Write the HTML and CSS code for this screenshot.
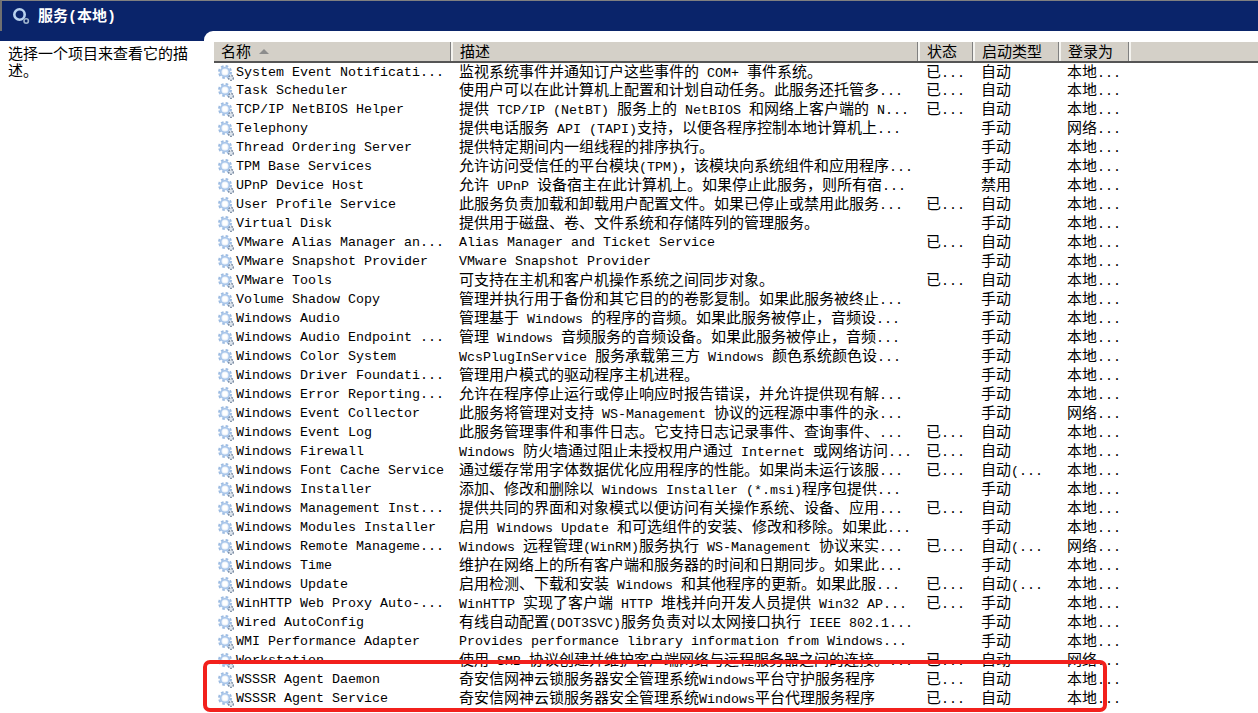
FILE: index.html
```html
<!DOCTYPE html>
<html lang="zh-CN">
<head>
    <meta charset="UTF-8">
    <title>服务(本地)</title>
    <link rel="stylesheet" href="styles.css">
</head>
<body>
    <svg class="defs" width="0" height="0">
        <symbol id="gear" viewBox="0 0 16 16">
            <circle cx="7" cy="7" r="6" fill="none" stroke="#9dbce2" stroke-width="2" stroke-dasharray="2.6 2.1"/>
            <circle cx="7" cy="7" r="4.4" fill="#eef4fb" stroke="#a9c6ea" stroke-width="1.8"/>
            <circle cx="7" cy="7" r="2.4" fill="#fff"/>
            <circle cx="13" cy="13" r="2.4" fill="#dfe6ee" stroke="#7f90a6" stroke-width="1.5" stroke-dasharray="1.6 1"/>
        </symbol>
    </svg>

    <header class="title-bar">
        <svg class="title-icon" width="18" height="18" viewBox="0 0 18 18">
            <circle cx="7.5" cy="7.5" r="5.2" fill="none" stroke="#b9d2ee" stroke-width="2.6"/>
            <circle cx="14.2" cy="14" r="2.2" fill="none" stroke="#9fb4cc" stroke-width="1.6"/>
        </svg>
        <h1 class="title">服务<span class="en-title">(</span>本地<span class="en-title">)</span></h1>
    </header>

    <div class="content">
        <aside class="info-panel">选择一个项目来查看它的描述。</aside>
        <main class="list-panel">
            <table class="services">
                <colgroup>
                    <col class="col-name"><col class="col-desc"><col class="col-status"><col class="col-start"><col class="col-logon"><col>
                </colgroup>
                <thead>
                    <tr>
                        <th>名称<span class="sort-arrow"></span></th>
                        <th>描述</th>
                        <th>状态</th>
                        <th>启动类型</th>
                        <th>登录为</th>
                        <th class="filler"></th>
                    </tr>
                </thead>
                <tbody>
                    <tr><td class="name"><svg class="icon"><use href="#gear"/></svg>System Event Notificati...</td><td>监视系统事件并通知订户这些事件的<span class="en"> COM+ </span>事件系统。</td><td>已<span class="en">...</span></td><td>自动</td><td>本地<span class="en">...</span></td><td></td></tr>
                    <tr><td class="name"><svg class="icon"><use href="#gear"/></svg>Task Scheduler</td><td>使用户可以在此计算机上配置和计划自动任务。此服务还托管多<span class="en">...</span></td><td>已<span class="en">...</span></td><td>自动</td><td>本地<span class="en">...</span></td><td></td></tr>
                    <tr><td class="name"><svg class="icon"><use href="#gear"/></svg>TCP/IP NetBIOS Helper</td><td>提供<span class="en"> TCP/IP (NetBT) </span>服务上的<span class="en"> NetBIOS </span>和网络上客户端的<span class="en"> N...</span></td><td>已<span class="en">...</span></td><td>自动</td><td>本地<span class="en">...</span></td><td></td></tr>
                    <tr><td class="name"><svg class="icon"><use href="#gear"/></svg>Telephony</td><td>提供电话服务<span class="en"> API (TAPI)</span>支持，以便各程序控制本地计算机上<span class="en">...</span></td><td></td><td>手动</td><td>网络<span class="en">...</span></td><td></td></tr>
                    <tr><td class="name"><svg class="icon"><use href="#gear"/></svg>Thread Ordering Server</td><td>提供特定期间内一组线程的排序执行。</td><td></td><td>手动</td><td>本地<span class="en">...</span></td><td></td></tr>
                    <tr><td class="name"><svg class="icon"><use href="#gear"/></svg>TPM Base Services</td><td>允许访问受信任的平台模块<span class="en">(TPM)</span>，该模块向系统组件和应用程序<span class="en">...</span></td><td></td><td>手动</td><td>本地<span class="en">...</span></td><td></td></tr>
                    <tr><td class="name"><svg class="icon"><use href="#gear"/></svg>UPnP Device Host</td><td>允许<span class="en"> UPnP </span>设备宿主在此计算机上。如果停止此服务，则所有宿<span class="en">...</span></td><td></td><td>禁用</td><td>本地<span class="en">...</span></td><td></td></tr>
                    <tr><td class="name"><svg class="icon"><use href="#gear"/></svg>User Profile Service</td><td>此服务负责加载和卸载用户配置文件。如果已停止或禁用此服务<span class="en">...</span></td><td>已<span class="en">...</span></td><td>自动</td><td>本地<span class="en">...</span></td><td></td></tr>
                    <tr><td class="name"><svg class="icon"><use href="#gear"/></svg>Virtual Disk</td><td>提供用于磁盘、卷、文件系统和存储阵列的管理服务。</td><td></td><td>手动</td><td>本地<span class="en">...</span></td><td></td></tr>
                    <tr><td class="name"><svg class="icon"><use href="#gear"/></svg>VMware Alias Manager an...</td><td class="en-cell">Alias Manager and Ticket Service</td><td>已<span class="en">...</span></td><td>自动</td><td>本地<span class="en">...</span></td><td></td></tr>
                    <tr><td class="name"><svg class="icon"><use href="#gear"/></svg>VMware Snapshot Provider</td><td class="en-cell">VMware Snapshot Provider</td><td></td><td>手动</td><td>本地<span class="en">...</span></td><td></td></tr>
                    <tr><td class="name"><svg class="icon"><use href="#gear"/></svg>VMware Tools</td><td>可支持在主机和客户机操作系统之间同步对象。</td><td>已<span class="en">...</span></td><td>自动</td><td>本地<span class="en">...</span></td><td></td></tr>
                    <tr><td class="name"><svg class="icon"><use href="#gear"/></svg>Volume Shadow Copy</td><td>管理并执行用于备份和其它目的的卷影复制。如果此服务被终止<span class="en">...</span></td><td></td><td>手动</td><td>本地<span class="en">...</span></td><td></td></tr>
                    <tr><td class="name"><svg class="icon"><use href="#gear"/></svg>Windows Audio</td><td>管理基于<span class="en"> Windows </span>的程序的音频。如果此服务被停止，音频设<span class="en">...</span></td><td></td><td>手动</td><td>本地<span class="en">...</span></td><td></td></tr>
                    <tr><td class="name"><svg class="icon"><use href="#gear"/></svg>Windows Audio Endpoint ...</td><td>管理<span class="en"> Windows </span>音频服务的音频设备。如果此服务被停止，音频<span class="en">...</span></td><td></td><td>手动</td><td>本地<span class="en">...</span></td><td></td></tr>
                    <tr><td class="name"><svg class="icon"><use href="#gear"/></svg>Windows Color System</td><td><span class="en">WcsPlugInService </span>服务承载第三方<span class="en"> Windows </span>颜色系统颜色设<span class="en">...</span></td><td></td><td>手动</td><td>本地<span class="en">...</span></td><td></td></tr>
                    <tr><td class="name"><svg class="icon"><use href="#gear"/></svg>Windows Driver Foundati...</td><td>管理用户模式的驱动程序主机进程。</td><td></td><td>手动</td><td>本地<span class="en">...</span></td><td></td></tr>
                    <tr><td class="name"><svg class="icon"><use href="#gear"/></svg>Windows Error Reporting...</td><td>允许在程序停止运行或停止响应时报告错误，并允许提供现有解<span class="en">...</span></td><td></td><td>手动</td><td>本地<span class="en">...</span></td><td></td></tr>
                    <tr><td class="name"><svg class="icon"><use href="#gear"/></svg>Windows Event Collector</td><td>此服务将管理对支持<span class="en"> WS-Management </span>协议的远程源中事件的永<span class="en">...</span></td><td></td><td>手动</td><td>网络<span class="en">...</span></td><td></td></tr>
                    <tr><td class="name"><svg class="icon"><use href="#gear"/></svg>Windows Event Log</td><td>此服务管理事件和事件日志。它支持日志记录事件、查询事件、<span class="en">...</span></td><td>已<span class="en">...</span></td><td>自动</td><td>本地<span class="en">...</span></td><td></td></tr>
                    <tr><td class="name"><svg class="icon"><use href="#gear"/></svg>Windows Firewall</td><td><span class="en">Windows </span>防火墙通过阻止未授权用户通过<span class="en"> Internet </span>或网络访问<span class="en">...</span></td><td>已<span class="en">...</span></td><td>自动</td><td>本地<span class="en">...</span></td><td></td></tr>
                    <tr><td class="name"><svg class="icon"><use href="#gear"/></svg>Windows Font Cache Service</td><td>通过缓存常用字体数据优化应用程序的性能。如果尚未运行该服<span class="en">...</span></td><td>已<span class="en">...</span></td><td>自动<span class="en">(...</span></td><td>本地<span class="en">...</span></td><td></td></tr>
                    <tr><td class="name"><svg class="icon"><use href="#gear"/></svg>Windows Installer</td><td>添加、修改和删除以<span class="en"> Windows Installer (*.msi)</span>程序包提供<span class="en">...</span></td><td></td><td>手动</td><td>本地<span class="en">...</span></td><td></td></tr>
                    <tr><td class="name"><svg class="icon"><use href="#gear"/></svg>Windows Management Inst...</td><td>提供共同的界面和对象模式以便访问有关操作系统、设备、应用<span class="en">...</span></td><td>已<span class="en">...</span></td><td>自动</td><td>本地<span class="en">...</span></td><td></td></tr>
                    <tr><td class="name"><svg class="icon"><use href="#gear"/></svg>Windows Modules Installer</td><td>启用<span class="en"> Windows Update </span>和可选组件的安装、修改和移除。如果此<span class="en">...</span></td><td></td><td>手动</td><td>本地<span class="en">...</span></td><td></td></tr>
                    <tr><td class="name"><svg class="icon"><use href="#gear"/></svg>Windows Remote Manageme...</td><td><span class="en">Windows </span>远程管理<span class="en">(WinRM)</span>服务执行<span class="en"> WS-Management </span>协议来实<span class="en">...</span></td><td>已<span class="en">...</span></td><td>自动<span class="en">(...</span></td><td>网络<span class="en">...</span></td><td></td></tr>
                    <tr><td class="name"><svg class="icon"><use href="#gear"/></svg>Windows Time</td><td>维护在网络上的所有客户端和服务器的时间和日期同步。如果此<span class="en">...</span></td><td></td><td>手动</td><td>本地<span class="en">...</span></td><td></td></tr>
                    <tr><td class="name"><svg class="icon"><use href="#gear"/></svg>Windows Update</td><td>启用检测、下载和安装<span class="en"> Windows </span>和其他程序的更新。如果此服<span class="en">...</span></td><td>已<span class="en">...</span></td><td>自动<span class="en">(...</span></td><td>本地<span class="en">...</span></td><td></td></tr>
                    <tr><td class="name"><svg class="icon"><use href="#gear"/></svg>WinHTTP Web Proxy Auto-...</td><td><span class="en">WinHTTP </span>实现了客户端<span class="en"> HTTP </span>堆栈并向开发人员提供<span class="en"> Win32 AP...</span></td><td>已<span class="en">...</span></td><td>手动</td><td>本地<span class="en">...</span></td><td></td></tr>
                    <tr><td class="name"><svg class="icon"><use href="#gear"/></svg>Wired AutoConfig</td><td>有线自动配置<span class="en">(DOT3SVC)</span>服务负责对以太网接口执行<span class="en"> IEEE 802.1...</span></td><td></td><td>手动</td><td>本地<span class="en">...</span></td><td></td></tr>
                    <tr><td class="name"><svg class="icon"><use href="#gear"/></svg>WMI Performance Adapter</td><td class="en-cell">Provides performance library information from Windows...</td><td></td><td>手动</td><td>本地<span class="en">...</span></td><td></td></tr>
                    <tr><td class="name"><svg class="icon"><use href="#gear"/></svg>Workstation</td><td>使用<span class="en"> SMB </span>协议创建并维护客户端网络与远程服务器之间的连接。<span class="en">...</span></td><td>已<span class="en">...</span></td><td>自动</td><td>网络<span class="en">...</span></td><td></td></tr>
                    <tr><td class="name"><svg class="icon"><use href="#gear"/></svg>WSSSR Agent Daemon</td><td>奇安信网神云锁服务器安全管理系统<span class="en">Windows</span>平台守护服务程序</td><td>已<span class="en">...</span></td><td>自动</td><td>本地<span class="en">...</span></td><td></td></tr>
                    <tr><td class="name"><svg class="icon"><use href="#gear"/></svg>WSSSR Agent Service</td><td>奇安信网神云锁服务器安全管理系统<span class="en">Windows</span>平台代理服务程序</td><td>已<span class="en">...</span></td><td>自动</td><td>本地<span class="en">...</span></td><td></td></tr>
                </tbody>
            </table>
        </main>
    </div>

    <div class="highlight"></div>
</body>
</html>
```

FILE: styles.css
```css
html, body {
    height: 100%;
}

body {
    margin: 0;
    display: flex;
    flex-direction: column;
    overflow: hidden;
    background-color: #fff;
    color: #000;
    font-family: "Noto Sans CJK SC", "Liberation Mono", monospace;
    font-size: 15px;
}

.defs {
    position: absolute;
}

.title-bar {
    display: flex;
    align-items: center;
    flex: none;
    height: 30px;
    padding-left: 10px;
    background-color: #0a246a;
    border-top: 1px solid #808080;
    border-left: 2px solid #707070;
}

.title-icon {
    flex: none;
    margin-right: 8px;
}

.title {
    margin: 0;
    color: #fff;
    font-size: 15px;
    font-weight: bold;
    line-height: 26px;
}

.en-title {
    font-family: "Liberation Mono", monospace;
}

.content {
    display: flex;
    flex: 1;
    min-height: 0;
    background-color: #0a246a;
}

.info-panel {
    flex: none;
    box-sizing: border-box;
    width: 204px;
    margin-top: 10px;
    padding: 3px 12px 0 8px;
    background-color: #fff;
    line-height: 17px;
}

.list-panel {
    flex: 1;
    min-width: 0;
    padding: 11px 0 0 10px;
    background-color: #fff;
    border-top-left-radius: 9px;
}

.services {
    width: 100%;
    table-layout: fixed;
    border-collapse: collapse;
}

.col-name { width: 238px; }
.col-desc { width: 467px; }
.col-status { width: 55px; }
.col-start { width: 86px; }
.col-logon { width: 70px; }

.services th {
    box-sizing: border-box;
    height: 20px;
    padding: 0 0 2px 7px;
    background-color: #d4d0c8;
    border-right: 2px solid #f4f3ef;
    border-bottom: 2px solid #555;
    box-shadow: inset -1px 0 0 #808080;
    font-weight: normal;
    line-height: 16px;
    text-align: left;
}

.services th.filler {
    border-right: 0;
    box-shadow: none;
}

.sort-arrow {
    display: inline-block;
    margin-left: 8px;
    border-left: 5px solid transparent;
    border-right: 5px solid transparent;
    border-bottom: 5px solid #8c8c8c;
    vertical-align: 3px;
}

.services td {
    box-sizing: border-box;
    height: 19px;
    padding: 0 0 0 7px;
    line-height: 15px;
    white-space: nowrap;
    overflow: hidden;
    vertical-align: top;
}

.services td.name,
.services td.en-cell {
    padding-top: 2px;
    font-family: "Liberation Mono", monospace;
    font-size: 13.33px;
}

.services td.name {
    padding-left: 4px;
}

.en {
    font-family: "Liberation Mono", monospace;
    font-size: 13.33px;
    line-height: 0;
    white-space: pre;
}

.icon {
    width: 16px;
    height: 16px;
    margin: -2px 2px -2px 0;
    vertical-align: -3px;
}

.highlight {
    position: absolute;
    left: 203px;
    top: 660px;
    width: 904px;
    height: 52px;
    box-sizing: border-box;
    border: 4px solid #f2201c;
    border-radius: 7px;
}
```
